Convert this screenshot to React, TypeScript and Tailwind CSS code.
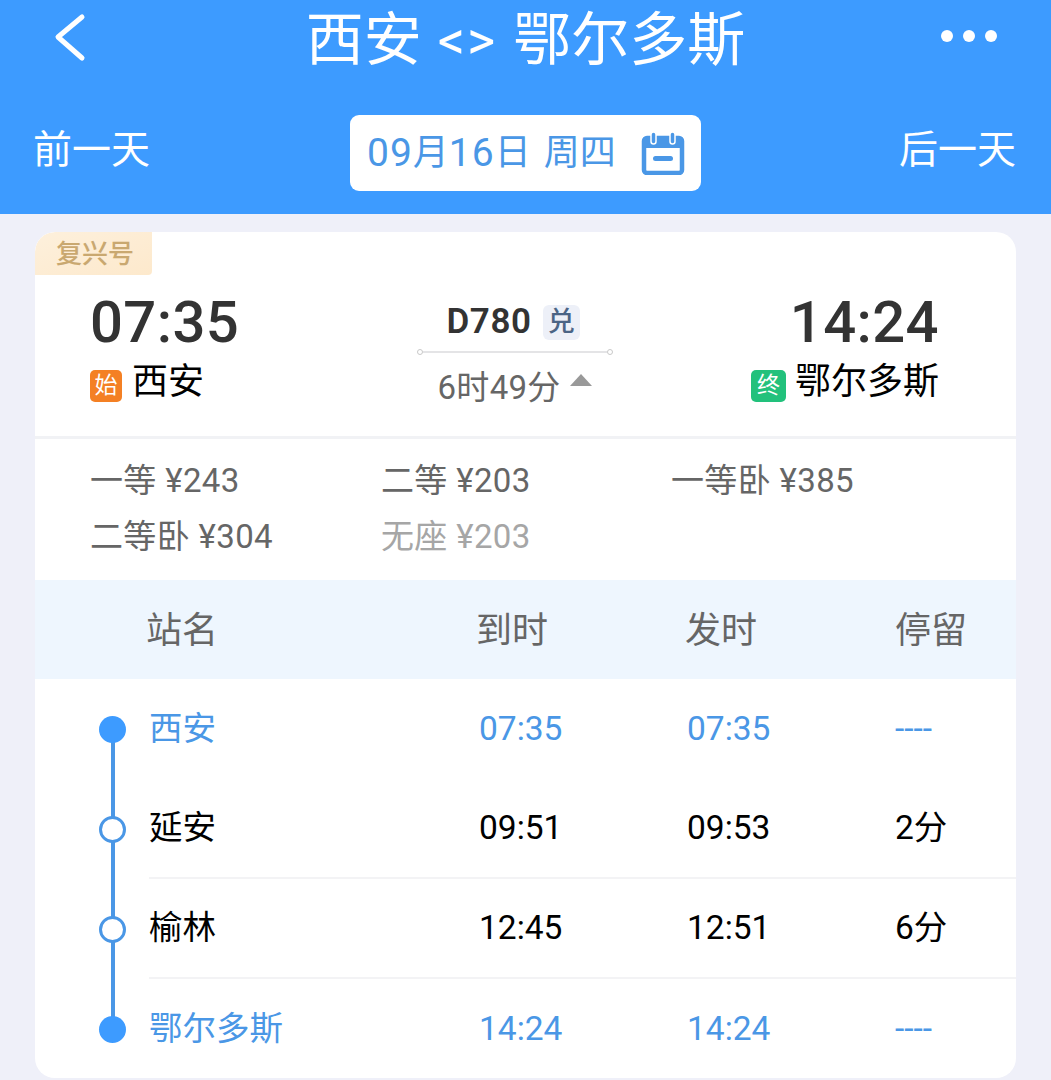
const FONT = "font-['Roboto','Noto_Sans_CJK_SC',sans-serif]";

interface Stop {
    name: string;
    arrive: string;
    depart: string;
    stay: string;
    end?: boolean;
}

const stops: Stop[] = [
    { name: "西安", arrive: "07:35", depart: "07:35", stay: "----", end: true },
    { name: "延安", arrive: "09:51", depart: "09:53", stay: "2分" },
    { name: "榆林", arrive: "12:45", depart: "12:51", stay: "6分" },
    { name: "鄂尔多斯", arrive: "14:24", depart: "14:24", stay: "----", end: true },
];

function BackIcon() {
    return (
        <svg className="absolute left-[50px] top-[10px]" width="40" height="54" viewBox="0 0 40 54" fill="none">
            <path d="M32 7 L8 27 L32 48" stroke="#ffffff" strokeWidth="5" strokeLinecap="round" strokeLinejoin="round" />
        </svg>
    );
}

function CalendarIcon() {
    return (
        <svg width="44" height="44" viewBox="0 0 44 44" fill="none">
            <rect x="3" y="7" width="38" height="35" rx="3" stroke="#4a97e6" strokeWidth="4.5" />
            <rect x="3" y="7" width="38" height="10" fill="#4a97e6" />
            <rect x="10" y="1" width="5" height="12" rx="2.5" fill="#4a97e6" stroke="#ffffff" strokeWidth="1.5" />
            <rect x="29" y="1" width="5" height="12" rx="2.5" fill="#4a97e6" stroke="#ffffff" strokeWidth="1.5" />
            <rect x="12" y="25" width="20" height="5" rx="2.5" fill="#4a97e6" />
        </svg>
    );
}

function Header() {
    return (
        <header className="h-[214px] bg-[#3d9bff] text-white flex flex-col">
            <div className="h-[115px] relative flex justify-center">
                <div className="mt-[7px] h-[66px] flex items-center text-[58px] leading-none">
                    <span>西安</span>
                    <span className="text-[54px] tracking-[2px] mx-[16px] mt-[2px]">&lt;&gt;</span>
                    <span>鄂尔多斯</span>
                </div>
                <BackIcon />
                <div className="absolute left-[941px] top-[30px] flex gap-[10px]">
                    <span className="w-[12px] h-[12px] rounded-full bg-white" />
                    <span className="w-[12px] h-[12px] rounded-full bg-white" />
                    <span className="w-[12px] h-[12px] rounded-full bg-white" />
                </div>
            </div>
            <div className="flex items-start justify-between pl-[33px] pr-[35px]">
                <span className="text-[39px] leading-[70px]">前一天</span>
                <div className="w-[351px] h-[76px] ml-[2px] rounded-[9px] bg-white flex items-center pl-[17px] text-[#4a97e6]">
                    <span className="text-[36px] leading-none w-[274px] whitespace-nowrap flex items-center">
                        <span className="text-[39px] tracking-[1px]">09</span>月<span className="text-[39px] tracking-[1px]">16</span>日
                        <span className="ml-[13px]">周四</span>
                    </span>
                    <CalendarIcon />
                </div>
                <span className="text-[39px] leading-[70px]">后一天</span>
            </div>
        </header>
    );
}

function Summary() {
    return (
        <div className="relative h-[207px] border-b-[3px] border-[#f1f2f5]">
            <div className="absolute left-0 top-0 w-[117px] h-[43px] rounded-tl-[20px] rounded-br-[4px] bg-gradient-to-br from-[#fdf0dc] to-[#fde9cc] text-[#c9a870] text-[26px] leading-[45px] pl-[21px] font-medium">
                复兴号
            </div>
            <div className="flex justify-between pl-[55px] pr-[77px] pt-[55px]">
                <div>
                    <div className="text-[58px] tracking-[0.4px] leading-[70px] font-medium text-[#333333]">07:35</div>
                    <div className="flex items-center">
                        <span className="w-[32px] h-[32px] rounded-[5px] bg-[#f48024] text-white text-[23px] leading-[32px] text-center mt-[7px]">始</span>
                        <span className="text-[36px] leading-[50px] text-black ml-[10px]">西安</span>
                    </div>
                </div>
                <div className="w-[196px] ml-[38px] flex flex-col items-center">
                    <div className="flex items-center h-[62px] mt-[4px] ml-[-3px]">
                        <span className="text-[35px] tracking-[0.6px] font-semibold text-[#333333] mr-[-2px]">D780</span>
                        <span className="ml-[13px] w-[37px] h-[35px] rounded-[6px] bg-[#edf0f8] text-[#4b6485] text-[27px] leading-[35px] text-center font-medium">兑</span>
                    </div>
                    <div className="w-full flex items-center mt-[-4px]">
                        <span className="w-[6px] h-[6px] rounded-full border border-[#c9c9c9]" />
                        <span className="flex-1 h-[2px] bg-[#e4e4e6]" />
                        <span className="w-[6px] h-[6px] rounded-full border border-[#c9c9c9]" />
                    </div>
                    <div className="flex items-center mt-[8px]">
                        <span className="text-[33px] tracking-[0.3px] leading-[50px] text-[#666666]">6时49分</span>
                        <span className="ml-[9px] mb-[16px] w-0 h-0 border-x-[11px] border-x-transparent border-b-[12px] border-b-[#999999]" />
                    </div>
                </div>
                <div className="flex flex-col items-end">
                    <div className="text-[58px] tracking-[0.4px] leading-[70px] font-medium text-[#333333]">14:24</div>
                    <div className="flex items-center">
                        <span className="w-[35px] h-[32px] rounded-[5px] bg-[#22c17c] text-white text-[23px] leading-[32px] text-center mt-[7px] ml-[-1px]">终</span>
                        <span className="text-[36px] leading-[50px] text-black ml-[9px]">鄂尔多斯</span>
                    </div>
                </div>
            </div>
        </div>
    );
}

function Prices() {
    return (
        <div className="h-[141px] pl-[55px] pt-[14px] grid grid-cols-[291px_290px_1fr] auto-rows-[56px] text-[33px] tracking-[0.35px] leading-[56px] text-[#666666]">
            <span>一等 ¥243</span>
            <span>二等 ¥203</span>
            <span>一等卧 ¥385</span>
            <span>二等卧 ¥304</span>
            <span className="text-[#a6a6a6]">无座 ¥203</span>
        </div>
    );
}

function StopRow({ stop, index }: { stop: Stop; index: number }) {
    const color = stop.end ? "text-[#4a97e6]" : "text-black";
    const last = index === stops.length - 1;
    return (
        <div className="flex h-[100px]">
            <div className="relative w-[114px] flex-none">
                {!last && <span className="absolute left-[76px] top-[50px] w-[4px] h-[100px] bg-[#4a97e6]" />}
                <span
                    className={
                        stop.end
                            ? "absolute left-[64px] top-[37px] w-[27px] h-[27px] rounded-full bg-[#3d9bff]"
                            : "absolute left-[64px] top-[37px] w-[27px] h-[27px] rounded-full bg-white border-[3px] border-[#4a97e6]"
                    }
                />
            </div>
            <div
                className={`flex-1 grid grid-cols-[330px_208px_208px_1fr] items-center pt-[1px] text-[33.5px] ${color} ${
                    index === 1 || index === 2 ? "border-b-[2px] border-[#f3f3f5]" : ""
                }`}
            >
                <span>{stop.name}</span>
                <span>{stop.arrive}</span>
                <span>{stop.depart}</span>
                <span>{stop.stay}</span>
            </div>
        </div>
    );
}

export default function App() {
    return (
        <div className={`w-[1051px] h-[1080px] overflow-hidden bg-[#eff0f9] ${FONT}`}>
            <Header />
            <main className="mt-[18px] mx-[35px] h-[846px] rounded-[20px] bg-white overflow-hidden">
                <Summary />
                <Prices />
                <div className="h-[99px] bg-[#eef6fe] pl-[111px] pt-[2px] grid grid-cols-[330px_209px_210px_1fr] items-center text-[36px] text-[#666666]">
                    <span>站名</span>
                    <span>到时</span>
                    <span>发时</span>
                    <span>停留</span>
                </div>
                {stops.map((stop, index) => (
                    <StopRow key={stop.name} stop={stop} index={index} />
                ))}
            </main>
        </div>
    );
}
